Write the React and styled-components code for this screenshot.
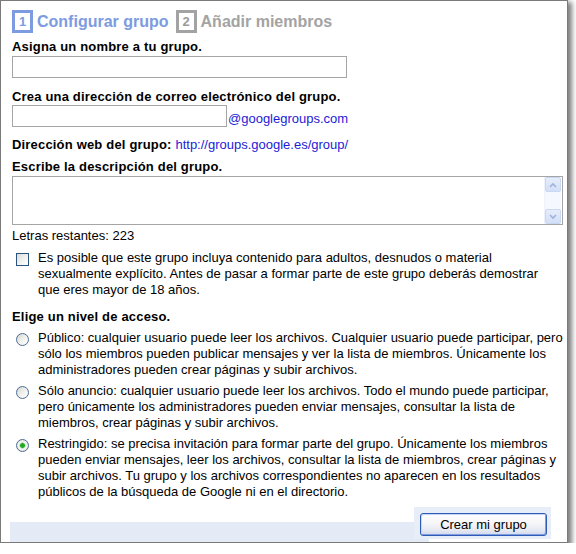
import React from "react";
import styled, { createGlobalStyle } from "styled-components";

const Global = createGlobalStyle`
  html, body { margin: 0; padding: 0; background: #ffffff; }
  body { font-family: "Liberation Sans", Arial, sans-serif; font-size: 13px; color: #000; }
`;

const Window = styled.div`
  box-sizing: border-box;
  width: 568px;
  height: 543px;
  border: 1px solid #7a7a7a;
  background: #ffffff;
  box-shadow: 3px 3px 5px 1px rgba(0, 0, 0, 0.5);
  display: flex;
  flex-direction: column;
  overflow: hidden;
`;

const Content = styled.div`
  padding-left: 11px;
  display: flex;
  flex-direction: column;
  align-items: flex-start;
`;

const Steps = styled.div`
  display: flex;
  align-items: center;
  margin-top: 9px;
  height: 23px;
`;

const Step = styled.div`
  display: flex;
  align-items: center;
  gap: 4px;
  margin-right: 7px;
  color: ${(p) => (p.$active ? "#7c9be0" : "#a3a3a3")};
  font-weight: bold;
  font-size: 16px;
  line-height: 19px;
`;

const StepNumber = styled.span`
  box-sizing: border-box;
  width: 21px;
  height: 23px;
  border: 3px solid ${(p) => (p.$active ? "#7c9be0" : "#a3a3a3")};
  color: ${(p) => (p.$active ? "#7c9be0" : "#9a9a9a")};
  display: flex;
  align-items: center;
  justify-content: center;
  font-size: 13px;
  font-weight: bold;
  line-height: 1;
`;

const Label = styled.div`
  font-weight: bold;
  line-height: 16px;
  letter-spacing: 0.18px;
  margin-top: ${(p) => p.$mt || 0}px;
  white-space: nowrap;
`;

const TextInput = styled.input`
  box-sizing: border-box;
  width: ${(p) => p.$w}px;
  height: 22px;
  margin: 0;
  padding: 1px 3px;
  border: 1px solid #a5a5a5;
  background: #fff;
  font: 13px "Liberation Sans", Arial, sans-serif;
  outline: none;
`;

const InlineRow = styled.div`
  display: flex;
  align-items: flex-end;
  margin-top: ${(p) => p.$mt || 0}px;
`;

const Link = styled.a`
  color: #1c1cd6;
  text-decoration: none;
  font-weight: normal;
  letter-spacing: 0;
  line-height: 16px;
`;

const DomainText = styled.span`
  color: #1c1cd6;
  line-height: 16px;
  margin-left: 1px;
`;

const AreaBox = styled.div`
  box-sizing: border-box;
  width: 551px;
  height: 49px;
  margin-top: 1px;
  border: 1px solid #a5a5a5;
  display: flex;
  background: #fff;
`;

const TextArea = styled.textarea`
  flex: 1;
  border: none;
  resize: none;
  outline: none;
  margin: 0;
  padding: 2px;
  font: 13px "Liberation Sans", Arial, sans-serif;
  background: transparent;
`;

const ScrollBar = styled.div`
  width: 16px;
  margin-right: 1px;
  display: flex;
  flex-direction: column;
  background: #f5f8fe;
  border-left: 1px solid #eef2fb;
`;

const ScrollButton = styled.div`
  box-sizing: border-box;
  height: 15px;
  border: 1px solid #c9d7f3;
  border-radius: 2px;
  background: linear-gradient(#e6edfb, #d3dff8);
  display: flex;
  align-items: center;
  justify-content: center;
`;

const Track = styled.div`
  flex: 1;
`;

const Plain = styled.div`
  line-height: 16px;
  margin-top: ${(p) => p.$mt || 0}px;
  white-space: nowrap;
`;

const Option = styled.label`
  display: flex;
  align-items: flex-start;
  margin-top: ${(p) => p.$mt || 0}px;
  padding-left: ${(p) => p.$pl || 4}px;
`;

const OptionText = styled.span`
  line-height: 16px;
  white-space: nowrap;
  margin-left: ${(p) => p.$ml || 9}px;
`;

const CheckBox = styled.input.attrs({ type: "checkbox" })`
  appearance: none;
  box-sizing: border-box;
  width: 13px;
  height: 13px;
  margin: 3px 0 0 0;
  flex: none;
  border: 1px solid #2b5382;
  background: linear-gradient(135deg, #dcdcd6 0%, #f4f4f2 60%, #ffffff 100%);
`;

const Radio = styled.input.attrs({ type: "radio" })`
  appearance: none;
  box-sizing: border-box;
  width: 13px;
  height: 13px;
  margin: 3px 0 0 0;
  flex: none;
  border-radius: 50%;
  border: 1px solid #4a6c94;
  background: ${(p) =>
    p.checked
      ? "radial-gradient(circle, #21a621 0 2px, #8fd88f 2.5px, #f4f4f2 3.5px, #dcdcd6 100%)"
      : "linear-gradient(135deg, #d6d6d0 0%, #f2f2ef 55%, #ffffff 100%)"};
`;

const Footer = styled.div`
  display: flex;
  align-items: flex-start;
  margin-top: 7px;
  margin-left: 9px;
`;

const FooterBar = styled.div`
  width: 419px;
  height: 20px;
  margin-top: 15px;
  background: #e4ebf7;
`;

const ButtonPanel = styled.div`
  width: 137px;
  height: 32px;
  margin-left: -15px;
  background: #e8eef8;
  position: relative;
  padding: 6px 0 0 6px;
  box-sizing: border-box;
`;

const Button = styled.button`
  box-sizing: border-box;
  width: 127px;
  height: 23px;
  margin: 0;
  padding: 0;
  border: 1px solid #2f5bb7;
  border-radius: 3px;
  background: linear-gradient(#ffffff 0%, #f6f6f8 45%, #e3e7f2 80%, #cfd8ee 100%);
  box-shadow: inset 1px 1px 0 #c7d6f6, inset -1px -1px 0 #7d9de0;
  font: 13px "Liberation Sans", Arial, sans-serif;
  color: #000;
`;

const Arrow = ({ up }) => (
  <svg width="8" height="6" viewBox="0 0 8 6">
    <path
      d={up ? "M1 5 L4 2 L7 5" : "M1 1 L4 4 L7 1"}
      fill="none"
      stroke="#9fb3da"
      strokeWidth="1.6"
    />
  </svg>
);

export default function App() {
  return (
    <>
      <Global />
      <Window>
        <Content>
          <Steps>
            <Step $active>
              <StepNumber $active>1</StepNumber>
              Configurar grupo
            </Step>
            <Step>
              <StepNumber>2</StepNumber>
              Añadir miembros
            </Step>
          </Steps>

          <Label $mt={6}>Asigna un nombre a tu grupo.</Label>
          <InlineRow $mt={1}>
            <TextInput $w={335} />
          </InlineRow>

          <Label $mt={11}>Crea una dirección de correo electrónico del grupo.</Label>
          <InlineRow>
            <TextInput $w={215} />
            <DomainText>@googlegroups.com</DomainText>
          </InlineRow>

          <Label $mt={10}>
            Dirección web del grupo: <Link href="#">http://groups.google.es/group/</Link>
          </Label>

          <Label $mt={6}>Escribe la descripción del grupo.</Label>
          <AreaBox>
            <TextArea />
            <ScrollBar>
              <ScrollButton>
                <Arrow up />
              </ScrollButton>
              <Track />
              <ScrollButton>
                <Arrow />
              </ScrollButton>
            </ScrollBar>
          </AreaBox>

          <Plain $mt={3}>Letras restantes: 223</Plain>

          <Option $mt={6}>
            <CheckBox />
            <OptionText $ml={9}>
              Es posible que este grupo incluya contenido para adultos, desnudos o material
              <br />
              sexualmente explícito. Antes de pasar a formar parte de este grupo deberás demostrar
              <br />
              que eres mayor de 18 años.
            </OptionText>
          </Option>

          <Label $mt={11}>Elige un nivel de acceso.</Label>

          <Option $mt={5} $pl={4}>
            <Radio name="access" />
            <OptionText>
              Público: cualquier usuario puede leer los archivos. Cualquier usuario puede participar, pero
              <br />
              sólo los miembros pueden publicar mensajes y ver la lista de miembros. Únicamente los
              <br />
              administradores pueden crear páginas y subir archivos.
            </OptionText>
          </Option>

          <Option $mt={5} $pl={4}>
            <Radio name="access" />
            <OptionText>
              Sólo anuncio: cualquier usuario puede leer los archivos. Todo el mundo puede participar,
              <br />
              pero únicamente los administradores pueden enviar mensajes, consultar la lista de
              <br />
              miembros, crear páginas y subir archivos.
            </OptionText>
          </Option>

          <Option $mt={5} $pl={4}>
            <Radio name="access" defaultChecked checked readOnly />
            <OptionText>
              Restringido: se precisa invitación para formar parte del grupo. Únicamente los miembros
              <br />
              pueden enviar mensajes, leer los archivos, consultar la lista de miembros, crear páginas y
              <br />
              subir archivos. Tu grupo y los archivos correspondientes no aparecen en los resultados
              <br />
              públicos de la búsqueda de Google ni en el directorio.
            </OptionText>
          </Option>
        </Content>

        <Footer>
          <FooterBar />
          <ButtonPanel>
            <Button>Crear mi grupo</Button>
          </ButtonPanel>
        </Footer>
      </Window>
    </>
  );
}
